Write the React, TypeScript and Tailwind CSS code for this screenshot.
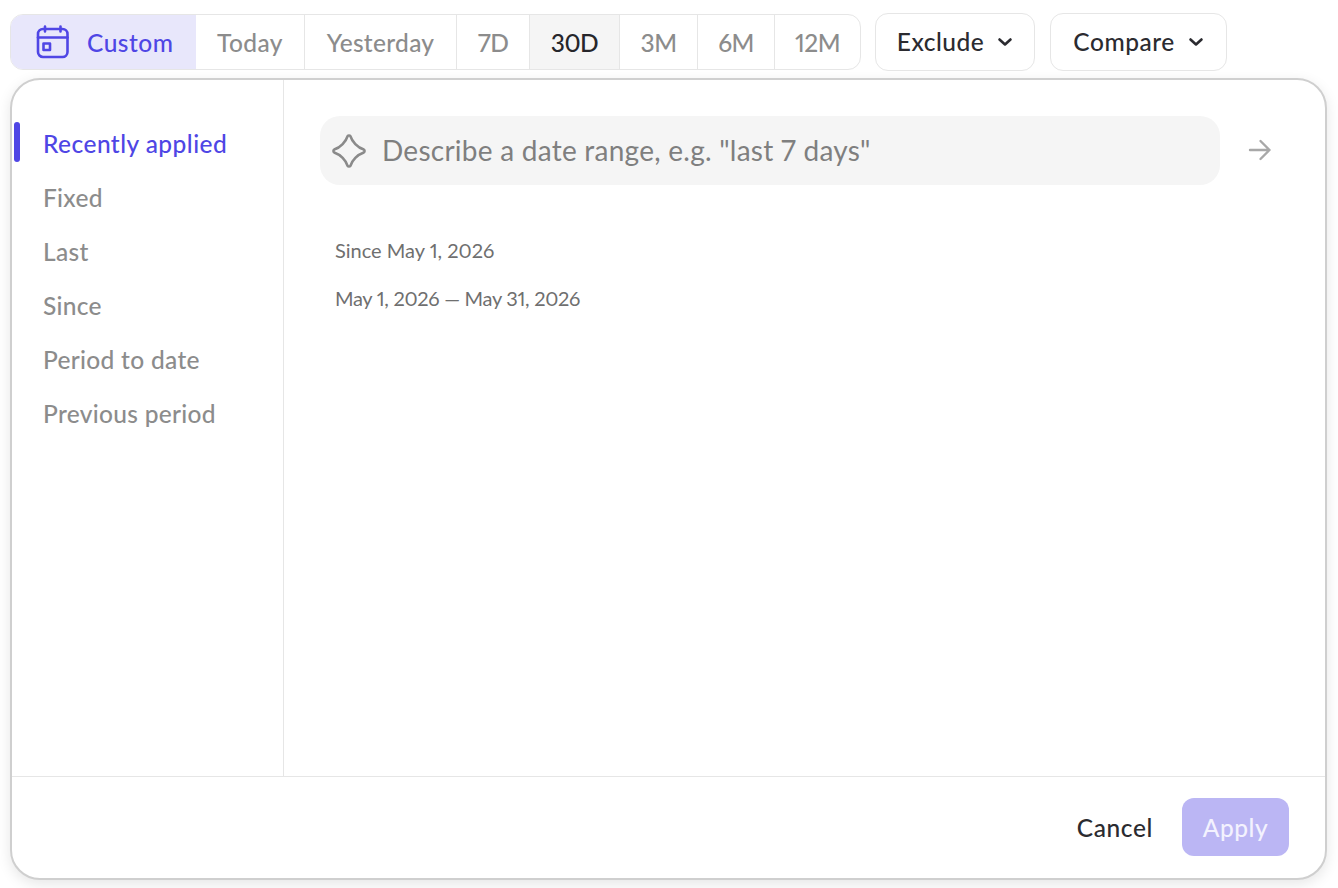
import React from "react";

function CalendarIcon() {
  return (
    <svg width="34" height="34" viewBox="0 0 34 34" fill="none" stroke="#4f46e5" strokeWidth="2.6" strokeLinecap="round" strokeLinejoin="round">
      <rect x="2" y="4" width="29.5" height="28" rx="5" />
      <path d="M2 12.5H31.5" />
      <path d="M9 1.5V6.5M24.5 1.5V6.5" />
      <rect x="7.5" y="18.5" width="6.5" height="6.5" />
    </svg>
  );
}

function Sparkle() {
  return (
    <svg width="36" height="36" viewBox="0 0 36 36" fill="none" stroke="#8a8a8a" strokeWidth="2.6" strokeLinejoin="round">
      <path d="M16.6 3.2C17.2 2.2 18.8 2.2 19.4 3.2C21 8.5 26.5 14.5 32.8 16.6C33.8 17.2 33.8 18.8 32.8 19.4C26.5 21.5 21 27.5 19.4 32.8C18.8 33.8 17.2 33.8 16.6 32.8C15 27.5 9.5 21.5 3.2 19.4C2.2 18.8 2.2 17.2 3.2 16.6C9.5 14.5 15 8.5 16.6 3.2Z" />
    </svg>
  );
}

function Chevron() {
  return (
    <svg width="16" height="10" viewBox="0 0 16 10" fill="none" stroke="#2b2b30" strokeWidth="2.6" strokeLinecap="round" strokeLinejoin="round">
      <path d="M2.5 2.5L8 7.5L13.5 2.5" />
    </svg>
  );
}

function Arrow() {
  return (
    <svg width="24" height="22" viewBox="0 0 24 22" fill="none" stroke="#a8a8a8" strokeWidth="2.4" strokeLinecap="round" strokeLinejoin="round">
      <path d="M2 11H21.5M12.5 2L21.5 11L12.5 20" />
    </svg>
  );
}

const segClass = "flex items-center justify-center border-r border-[#e6e6e6] pt-[3px] text-[24.5px] font-medium text-[#8c8c8c]";

export default function App() {
  return (
    <div className="w-[1338px] h-[888px] overflow-hidden bg-white proportional-nums font-['Lato','Liberation_Sans',sans-serif]">
      <div className="flex items-center pl-[10px] pt-[13px] h-[71px]">
        <div className="flex h-[56px] w-[851px] rounded-[13px] border border-[#e6e6e6] overflow-hidden">
          <div className="flex items-center w-[185px] shrink-0 bg-[#e8e7fb] text-[#4f46e5] text-[24.5px] tracking-[0.5px] font-medium pl-[25px] gap-[17px]">
            <CalendarIcon />
            <span className="pt-[3px]">Custom</span>
          </div>
          <div className={segClass + " w-[109px] tracking-[0.4px]"}>Today</div>
          <div className={segClass + " w-[152px] tracking-[0.3px]"}>Yesterday</div>
          <div className={segClass + " w-[73px] tracking-[-0.5px]"}>7D</div>
          <div className={segClass + " w-[90px] tracking-[-0.5px] bg-[#f5f5f5] text-[#26262b]"}>30D</div>
          <div className={segClass + " w-[78px] tracking-[-0.5px]"}>3M</div>
          <div className={segClass + " w-[77px] tracking-[-0.5px]"}>6M</div>
          <div className="flex items-center justify-center flex-1 pt-[3px] text-[24.5px] tracking-[-0.5px] font-medium text-[#8c8c8c]">12M</div>
        </div>
        <div className="ml-[14px] flex items-center justify-center gap-[13px] w-[160px] h-[58px] rounded-[13px] border border-[#e6e6e6] text-[24.5px] tracking-[0.5px] font-medium text-[#2b2b30]">
          <span>Exclude</span>
          <Chevron />
        </div>
        <div className="ml-[15px] flex items-center justify-center gap-[13px] w-[177px] h-[58px] rounded-[13px] border border-[#e6e6e6] text-[24.5px] tracking-[0.5px] font-medium text-[#2b2b30]">
          <span>Compare</span>
          <Chevron />
        </div>
      </div>

      <div className="mt-[7px] ml-[10px] w-[1317px] h-[802px] rounded-[30px] border-2 border-[#cfcfcf] bg-white shadow-[0_4px_14px_rgba(0,0,0,0.10)] flex flex-col overflow-hidden">
        <div className="flex flex-1 min-h-0">
          <div className="w-[272px] shrink-0 border-r border-[#e6e6e6] pt-[37px] flex flex-col">
            <div className="relative h-[54px] flex items-center pl-[31px] text-[24.5px] tracking-[0.45px] font-medium text-[#4f46e5]">
              <div className="absolute left-[2px] top-[5px] w-[6px] h-[40px] rounded-full bg-[#4f46e5]" />
              Recently applied
            </div>
            {["Fixed", "Last", "Since", "Period to date", "Previous period"].map((t) => (
              <div key={t} className="h-[54px] flex items-center pl-[31px] text-[24.5px] tracking-[0.3px] font-medium text-[#8c8c8c]">
                {t}
              </div>
            ))}
          </div>
          <div className="flex-1 pl-[36px] pt-[36px]">
            <div className="flex items-center">
              <div className="w-[900px] h-[69px] rounded-[20px] bg-[#f5f5f5] flex items-center pl-[11px] gap-[15px] text-[28px] tracking-[0.25px] text-[#7f7f7f]">
                <Sparkle />
                <span className="pb-[2px]">Describe a date range, e.g. "last 7 days"</span>
              </div>
              <div className="ml-[28px] pb-[2px] flex items-center"><Arrow /></div>
            </div>
            <div className="pl-[15px] pt-[53px] flex flex-col gap-[24px] text-[20px] leading-[24px] text-[#6f6f6f]">
              <div>Since May 1, 2026</div>
              <div className="tracking-[-0.3px]">May 1, 2026 — May 31, 2026</div>
            </div>
          </div>
        </div>
        <div className="h-[102px] shrink-0 border-t border-[#e6e6e6] flex items-center justify-end pr-[36px] pb-[2px] gap-[29px]">
          <span className="pt-[3px] text-[24.5px] tracking-[0.6px] font-medium text-[#2b2b30]">Cancel</span>
          <div className="w-[107px] h-[58px] pt-[3px] rounded-[12px] bg-[#bbb6f4] flex items-center justify-center text-[24.5px] tracking-[0.5px] font-medium text-[#f3f2fe]">Apply</div>
        </div>
      </div>
    </div>
  );
}
